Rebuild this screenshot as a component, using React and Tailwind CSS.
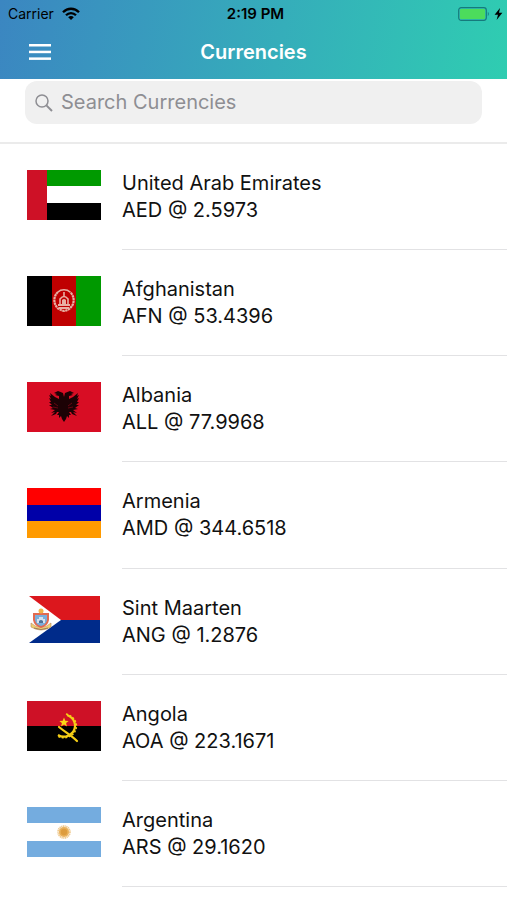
// ── Flags (all drawn on a 74 x 50 canvas) ──
const EmiratesFlag = () => (
  <>
    <rect width="74" height="50" fill="#fff" />
    <rect x="19" width="55" height="16" fill="#009a00" />
    <rect x="19" y="33" width="55" height="17" fill="#000" />
    <rect width="20" height="50" fill="#ce1126" />
  </>
)

const AfghanistanFlag = () => (
  <>
    <rect width="25" height="50" fill="#000" />
    <rect x="25" width="25" height="50" fill="#bf0000" />
    <rect x="49" width="25" height="50" fill="#009900" />
    <g fill="none" stroke="#e8b0a4">
      <path d="M31 16C25 21 26 33 37 35C48 33 49 21 43 16" strokeWidth="2.2" strokeDasharray="2.4 .5" />
      <path d="M31 16C34 13 40 13 43 16" strokeWidth="1.6" />
      <path d="M31 29h12M32 32h10" strokeWidth="1.8" />
      <path d="M33 28v-5q4-5 8 0v5M37 16v4" strokeWidth="1.6" />
    </g>
    <path d="M35 28v-4q2-2 4 0v4z" fill="#e8b0a4" />
  </>
)

const AlbaniaFlag = () => (
  <>
    <rect width="74" height="50" fill="#d80d24" />
    <path
      fill="#1c0205"
      d="M37 15l-1-4-5-2-4 2 3 1-2 1 4 1v3l-4-2-5-4 1 3-2-1 2 4-2-1 2 4-2 0 3 3-3 0 4 3-3 1 5 1-4 3 4-1-4 4 5-2 1-2 2 0-2 3 2 0 0 3 2-2 1 3 2 3 2-3 1-3 2 2 0-3 2 0-2-3 2 0 1 2 5 2-4-4 4 1-4-3 5-1-3-1 4-3-3 0 3-3-2 0 2-4-2 1 2-4-2 1 1-3-5 4-4 2v-3l4-1-2-1 3-1-4-2-5 2z"
    />
    <path d="M27 21l4 3M26 25l5 1M45 21l-4 3M46 25l-5 1" stroke="#8a0919" strokeWidth=".7" />
  </>
)

const ArmeniaFlag = () => (
  <>
    <rect width="74" height="17" fill="#ff0000" />
    <rect y="17" width="74" height="16" fill="#0000a8" />
    <rect y="33" width="74" height="17" fill="#ff9a00" />
  </>
)

const SintMaartenFlag = () => (
  <>
    <rect width="74" height="50" fill="#fff" />
    <path d="M2 1H73V25H34z" fill="#dc171d" />
    <path d="M2 48H73V25H34z" fill="#002b8a" />
    <path d="M4 28q10 9 20 0v4q-10 6-20 0z" fill="#f1d06f" stroke="#b88658" strokeWidth=".6" />
    <path d="M6 18h16v7q-1 6-8 8q-7-2-8-8z" fill="#e26a4f" />
    <path d="M8 20h12v5q-1 5-6 6q-5-1-6-6z" fill="#7aaedb" />
    <path d="M10 28v-4h2v-2h4v2h2v4z" fill="#d5e2ee" />
    <path d="M12 28v-2q2-2 4 0v2" fill="#4d7097" />
    <circle cx="14" cy="16" r="2.5" fill="#f1b24a" />
    <path d="M7 33q7 3 14 0" fill="none" stroke="#866a52" strokeWidth=".8" />
  </>
)

const AngolaFlag = () => (
  <>
    <rect width="74" height="50" fill="#ce1126" />
    <rect y="25" width="74" height="25" fill="#000" />
    <path d="M40 14C48 17 50 25 46 31C42 36 36 37 31 34" fill="none" stroke="#f5ce16" strokeWidth="2.2" />
    <path d="M39 13C49 16 52 25 47 32C43 37 36 38 30 35" fill="none" stroke="#f5ce16" strokeWidth="1.6" strokeDasharray="2 1.6" />
    <path d="M32 26C38 31 44 34 50 40" fill="none" stroke="#f5ce16" strokeWidth="2.2" strokeLinecap="round" />
    <path d="M37 16.500l1.300 3.200 3.400.2-2.600 2.200.8 3.300-2.900-1.800-2.900 1.800.8-3.300-2.600-2.200 3.400-.2z" fill="#f9d616" />
  </>
)

const ArgentinaFlag = () => (
  <>
    <rect width="74" height="50" fill="#fff" />
    <rect width="74" height="16" fill="#74acdf" />
    <rect y="34" width="74" height="16" fill="#74acdf" />
    <circle cx="37" cy="25" r="5.800" fill="none" stroke="#efc98e" strokeWidth="2" strokeDasharray="1.200 .5" />
    <circle cx="37" cy="25" r="5" fill="#e9b05a" />
    <circle cx="37" cy="25" r="3.200" fill="#dd9c3e" />
  </>
)

const currencies = [
  { country: 'United Arab Emirates', code: 'AED', rate: '2.5973', Flag: EmiratesFlag },
  { country: 'Afghanistan', code: 'AFN', rate: '53.4396', Flag: AfghanistanFlag },
  { country: 'Albania', code: 'ALL', rate: '77.9968', Flag: AlbaniaFlag },
  { country: 'Armenia', code: 'AMD', rate: '344.6518', Flag: ArmeniaFlag },
  { country: 'Sint Maarten', code: 'ANG', rate: '1.2876', Flag: SintMaartenFlag },
  { country: 'Angola', code: 'AOA', rate: '223.1671', Flag: AngolaFlag },
  { country: 'Argentina', code: 'ARS', rate: '29.1620', Flag: ArgentinaFlag },
]

// ── Status bar ──
const StatusBar = () => (
  <div className="grid grid-cols-3 items-center h-7 pl-2 pr-1 text-black text-sm">
    <div className="flex items-center gap-2">
      <span>Carrier</span>
      <svg width="18" height="14" viewBox="0 0 18 14" fill="none" stroke="#000" strokeWidth="2.3" aria-hidden="true">
        <path d="M1 5.200C5.500.6 12.500.6 17 5.200" />
        <path d="M4 8.300C6.800 5.400 11.200 5.400 14 8.300" />
        <path d="M9 13L6.200 10.200C7.800 8.700 10.200 8.700 11.800 10.200z" fill="#000" stroke="none" />
      </svg>
    </div>
    <span className="text-center text-[15px] font-semibold">2:19 PM</span>
    <div className="flex items-center justify-end gap-1">
      <svg width="32" height="14" viewBox="0 0 32 14" aria-hidden="true">
        <rect x=".7" y=".7" width="27.600" height="12.600" rx="2.500" fill="none" stroke="#167a7c" strokeWidth="1.200" />
        <rect x="2" y="2" width="25" height="10" rx="1.200" fill="#4cdc5c" />
        <path d="M29.800 4.800q2 2.200 0 4.400z" fill="#167a7c" />
      </svg>
      <svg width="9" height="12" viewBox="0 0 9 12" aria-hidden="true">
        <path d="M6 0L.6 6.800H4L2.600 12L8.400 4.800H5z" fill="#000" />
      </svg>
    </div>
  </div>
)

// ── Nav bar ──
const Header = () => (
  <header className="bg-linear-100 from-[#3b86c1] to-[#2fcdb1] h-[79px]">
    <StatusBar />
    <div className="grid grid-cols-3 items-center h-12">
      <button type="button" aria-label="Menu" className="w-8 h-8 ml-6 flex items-center justify-center">
        <svg width="22" height="16" viewBox="0 0 22 16" fill="#fff" aria-hidden="true">
          <rect width="22" height="2.500" />
          <rect y="6.700" width="22" height="2.500" />
          <rect y="13.400" width="22" height="2.500" />
        </svg>
      </button>
      <h1 className="text-center text-xl font-semibold text-white">Currencies</h1>
    </div>
  </header>
)

const SearchBar = () => (
  <div className="px-[25px] pt-0.5 pb-[18px] border-b-2 border-[#ebebeb]">
    <label className="flex items-center gap-2 h-[43px] px-2.5 rounded-xl bg-[#f0f0f0]">
      <svg width="18" height="18" viewBox="0 0 18 18" fill="none" stroke="#8e8e93" strokeWidth="1.500" aria-hidden="true">
        <circle cx="7" cy="7" r="6" />
        <path d="M11.400 11.400L17 17" strokeWidth="2" />
      </svg>
      <input
        type="search"
        aria-label="Search Currencies"
        placeholder="Search Currencies"
        className="flex-1 min-w-0 pb-0.5 bg-transparent text-xl outline-none placeholder:text-[#8e8e93]"
      />
    </label>
  </div>
)

const CurrencyRow = ({ country, code, rate, Flag }) => (
  <li className="flex flex-1 gap-[21px] pl-[27px]">
    <div className="flex items-center pb-1">
      <svg width="74" height="50" viewBox="0 0 74 50" role="img" aria-label={`Flag of ${country}`}>
        <Flag />
      </svg>
    </div>
    <div className="flex flex-1 flex-col justify-center min-h-[106px] pt-px border-b border-[#e2e2e4] text-xl leading-[27px] text-[#111]">
      <p>{country}</p>
      <p>{code} @ {rate}</p>
    </div>
  </li>
)

const App = () => {
  return (
    <div className="min-h-screen flex flex-col bg-white font-['Inter',sans-serif]">
      <Header />
      <main className="flex flex-1 flex-col pb-[13px]">
        <SearchBar />
        <ul className="flex flex-1 flex-col">
          {currencies.map((item) => (
            <CurrencyRow key={item.code} {...item} />
          ))}
        </ul>
      </main>
    </div>
  )
}

export default App
